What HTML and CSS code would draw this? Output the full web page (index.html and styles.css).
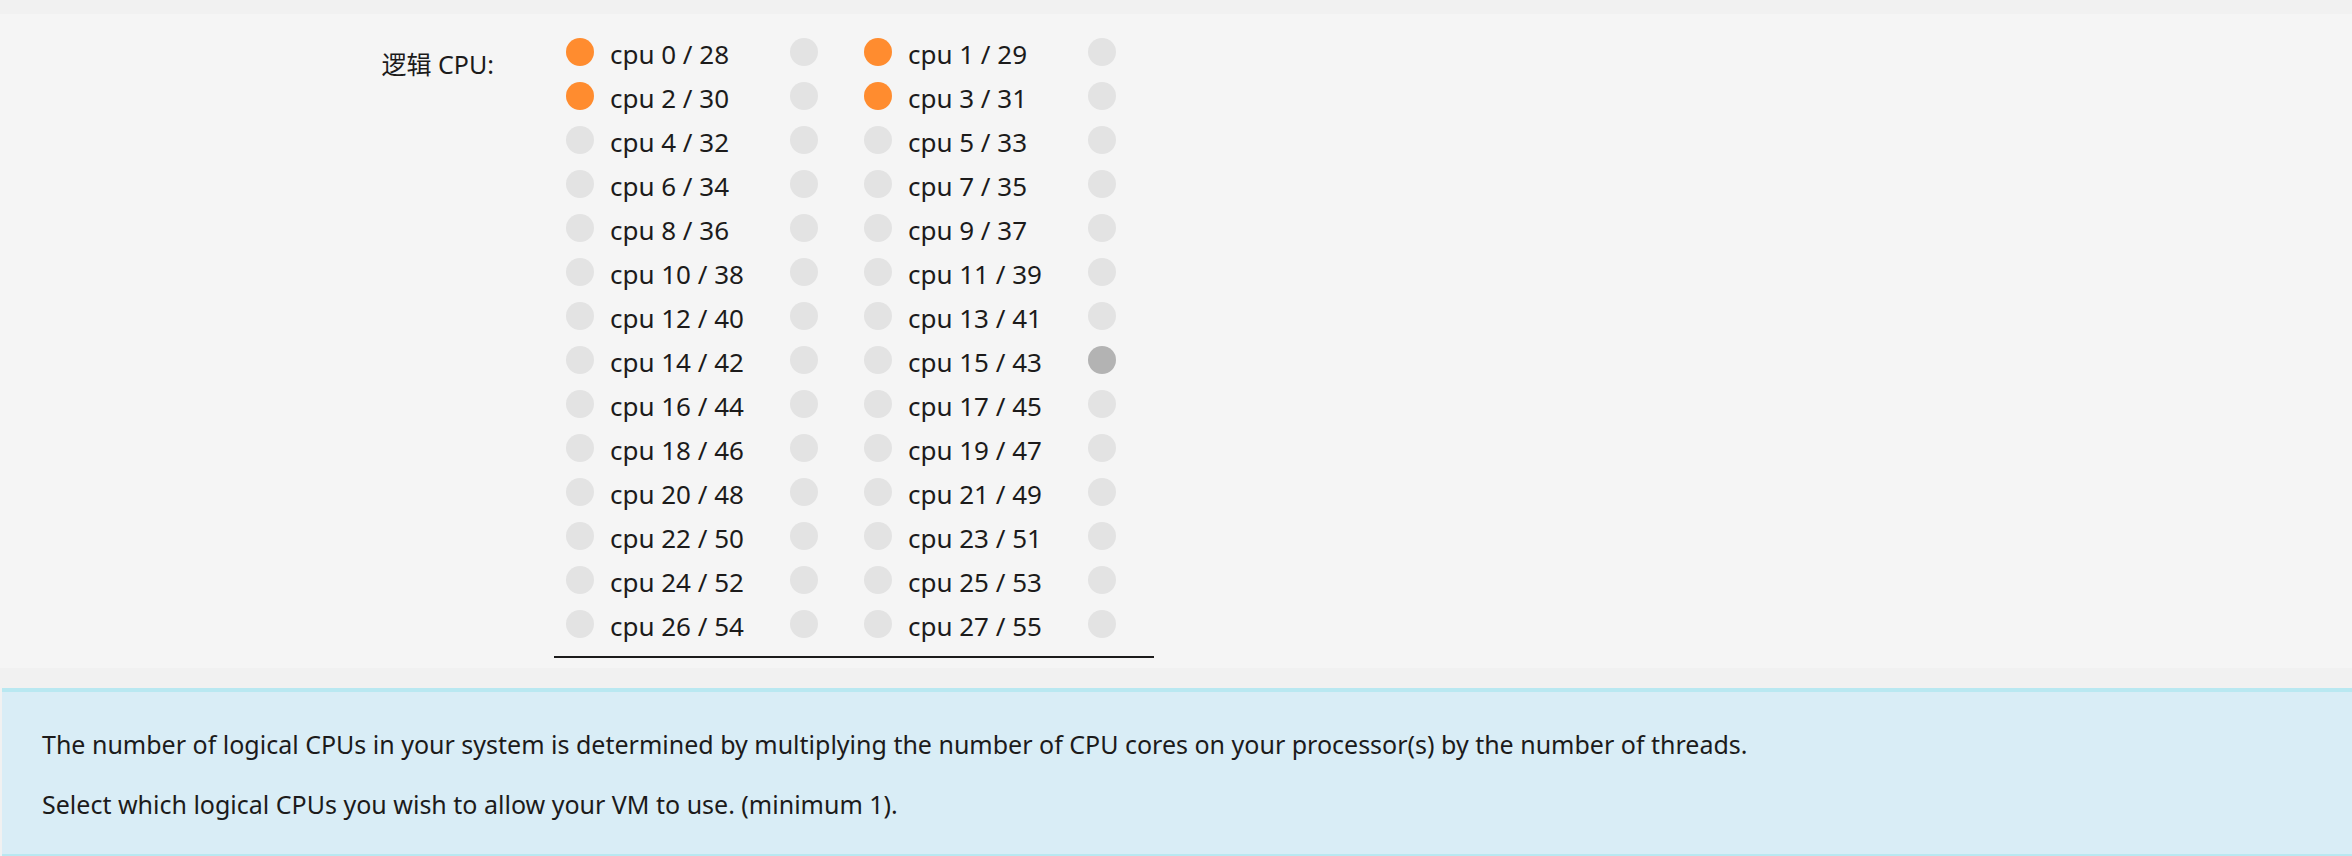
FILE: index.html
```html
<!DOCTYPE html>
<html lang="zh-CN">
<head>
<meta charset="utf-8">
<title>逻辑 CPU</title>
<link rel="stylesheet" href="styles.css">
</head>
<body>
<form class="settings">
  <div class="field">
    <div class="field-label" id="cpu-title">逻辑 CPU:</div>
    <div class="cpu-grid" id="cpus" role="group" aria-labelledby="cpu-title"></div>
  </div>
</form>
<aside class="help">
  <p>The number of logical CPUs in your system is determined by multiplying the number of CPU cores on your processor(s) by the number of threads.</p>
  <p>Select which logical CPUs you wish to allow your VM to use. (minimum 1).</p>
</aside>
<script src="app.js"></script>
</body>
</html>
```
FILE: styles.css
```css
* {
  box-sizing: border-box;
}

body {
  margin: 0;
  padding-top: 14px;
  background: #f1f1f1;
  color: #1c1b1b;
  font-family: "Noto Sans", "Noto Sans CJK SC", sans-serif;
  font-size: 25px;
  line-height: 44px;
}

.settings {
  background: #f5f5f5;
  padding: 16px 0 10px;
}

.field {
  display: flex;
  gap: 60px;
}

.field-label {
  width: 21%;
  padding-top: 12px;
  text-align: right;
}

.cpu-grid {
  display: grid;
  grid-template-columns: 298px 302px;
  padding-bottom: 10px;
  border-bottom: 2px solid #1c1b1b;
  font-size: 26px;
}

.cpu {
  display: flex;
  height: 44px;
  padding-left: 12px;
}

.cpu-name {
  width: 196px;
  padding: 2px 0 0 16px;
}

.dot {
  appearance: none;
  flex: none;
  width: 28px;
  height: 28px;
  margin: 8px 0 0;
  border-radius: 50%;
  background: #e3e3e3;
  cursor: pointer;
}

.dot:checked {
  background: #ff8c2f;
}

.dot.is-hover {
  background: #b3b3b3;
}

.help {
  margin: 20px 0 0 2px;
  padding: 30px 40px 28px;
  border-top: 4px solid #b9e8f1;
  border-bottom: 2px solid #b9e8f1;
  background: #d9edf6;
}

.help p {
  margin: 0;
}

.help p + p {
  margin-top: 16px;
}
```
FILE: app.js
```js
const COUNT = 28;
const selected = new Set([0, 1, 2, 3]);
const highlighted = 43;
const grid = document.getElementById("cpus");

function dot(n) {
  const input = document.createElement("input");
  input.type = "checkbox";
  input.id = "cpu" + n;
  input.className = n === highlighted ? "dot is-hover" : "dot";
  input.checked = selected.has(n);
  return input;
}

for (let n = 0; n < COUNT; n++) {
  const pair = n + COUNT;
  const cell = document.createElement("div");
  const name = document.createElement("label");
  const sibling = dot(pair);
  cell.className = "cpu";
  name.className = "cpu-name";
  name.htmlFor = "cpu" + n;
  name.textContent = `cpu ${n} / ${pair}`;
  sibling.setAttribute("aria-label", "cpu " + pair);
  cell.append(dot(n), name, sibling);
  grid.append(cell);
}
```
